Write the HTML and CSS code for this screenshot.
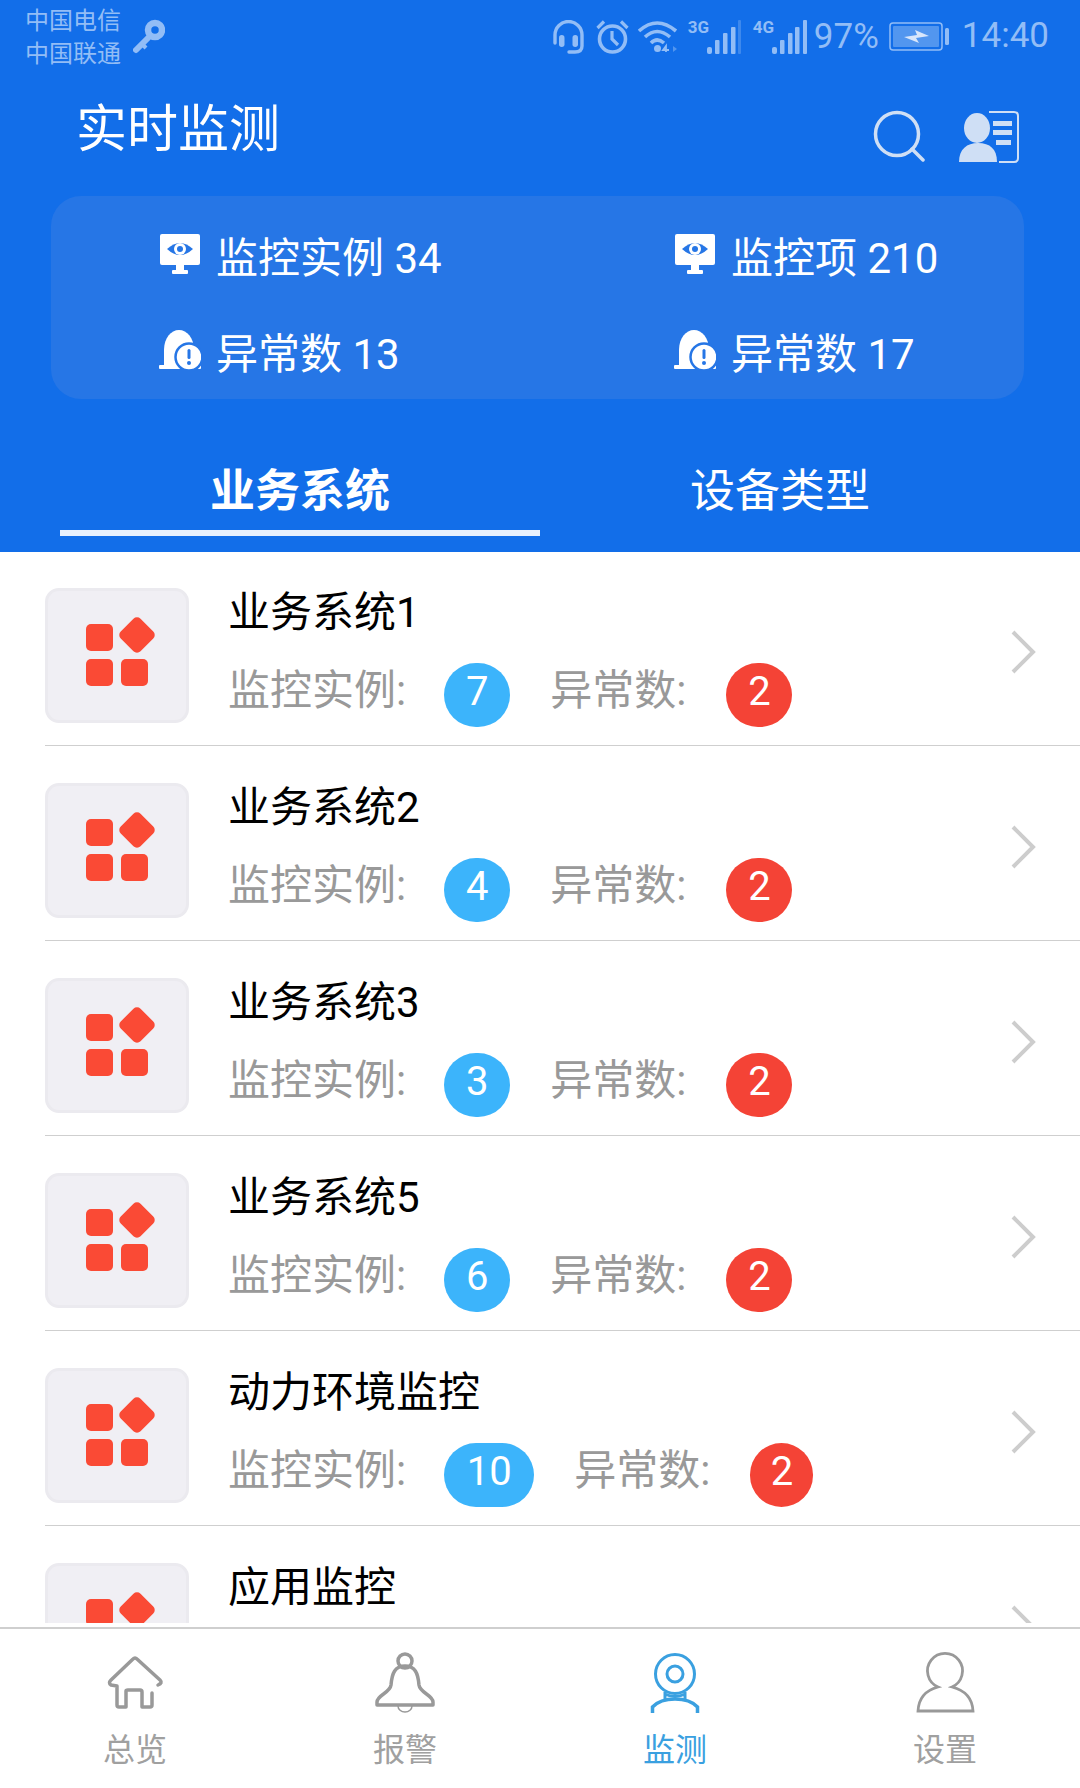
FILE: index.html
```html
<!DOCTYPE html>
<html lang="zh-CN">

<head>
    <meta charset="UTF-8">
    <meta name="viewport" content="width=device-width, initial-scale=1.0">
    <title>实时监测</title>
    <link rel="stylesheet" href="styles.css">
</head>

<body>
    <svg class="defs" width="0" height="0">
        <symbol id="apps" viewBox="0 -8 70 70">
            <rect x="0" y="0" width="27" height="27" rx="5" />
            <rect x="0" y="35" width="27" height="27" rx="5" />
            <rect x="35" y="35" width="27" height="27" rx="5" />
            <rect x="37" y="-3" width="28" height="28" rx="5" transform="rotate(45 51 11)" />
        </symbol>
        <symbol id="chevron" viewBox="0 0 26 44">
            <path d="M3 2 L23 22 L3 42" fill="none" stroke="#cdcdcd" stroke-width="4" />
        </symbol>
        <symbol id="monitor" viewBox="0 0 40 40">
            <rect x="0" y="0" width="40" height="31" rx="2" fill="#fff" />
            <rect x="16" y="30" width="8" height="6" fill="#fff" />
            <rect x="12" y="36" width="16" height="4" rx="1" fill="#fff" />
            <path d="M7 15 Q20 3 33 15 Q20 27 7 15 Z" fill="#2676e6" />
            <circle cx="20" cy="15" r="6" fill="#fff" />
            <circle cx="20" cy="15" r="3" fill="#2676e6" />
        </symbol>
        <symbol id="alert" viewBox="0 0 42 40">
            <path d="M5 35 V20 C5 8 12 0 20 0 C28 0 35 8 35 20 V35 Z" fill="#fff" />
            <rect x="0" y="35" width="42" height="4" rx="1" fill="#fff" />
            <circle cx="30" cy="27" r="13.5" fill="#fff" stroke="#2676e6" stroke-width="2.5" />
            <rect x="28.5" y="19" width="3" height="10" rx="1.5" fill="#2676e6" />
            <circle cx="30" cy="33" r="2" fill="#2676e6" />
        </symbol>
    </svg>

    <header class="app-header">
        <div class="status-bar">
            <div class="carriers">
                <span>中国电信</span>
                <span>中国联通</span>
            </div>
            <svg class="key" width="32" height="35" viewBox="0 0 32 35">
                <circle cx="22" cy="11" r="7" fill="none" stroke="currentColor" stroke-width="6.5" />
                <path d="M16 18 L3 31" stroke="currentColor" stroke-width="6" stroke-linecap="round" />
                <path d="M9 25 L13 29" stroke="currentColor" stroke-width="4" />
            </svg>
            <div class="status-right">
                <svg class="st-headset" width="31" height="34" viewBox="0 0 31 34" fill="none" stroke="currentColor">
                    <path d="M2 23 V15 A13.5 13.5 0 0 1 29 15 V26 Q29 32 22 32 H16" stroke-width="3.400" stroke-linecap="round" />
                    <rect x="6" y="15" width="5.500" height="12" rx="2.700" fill="currentColor" stroke="none" />
                    <rect x="19.500" y="15" width="5.500" height="12" rx="2.700" fill="currentColor" stroke="none" />
                </svg>
                <svg class="st-alarm" width="33" height="34" viewBox="0 0 33 34" fill="none" stroke="currentColor">
                    <circle cx="16.500" cy="19" r="13" stroke-width="3.600" />
                    <path d="M16 11 V19 L22 25" stroke-width="3.200" />
                    <path d="M1.500 8 L8 1.500 M31.500 8 L25 1.500" stroke-width="3.200" />
                </svg>
                <svg class="st-wifi" width="40" height="33" viewBox="0 0 40 33" fill="none" stroke="currentColor">
                    <path d="M1 11 Q19 -5 38 11" stroke-width="3.600" />
                    <path d="M7 17 Q19 6 32 17" stroke-width="3.600" />
                    <path d="M13 23 Q19 17 26 23" stroke-width="3.600" />
                    <circle cx="19.500" cy="28.500" r="3.500" fill="currentColor" stroke="none" />
                    <path d="M28 32 V26 L25 30 H31" stroke-width="1.800" />
                    <path d="M35 26 L39 29 L35 32 Z" fill="currentColor" stroke="none" opacity=".5" />
                </svg>
                <span class="net-label">3G</span>
                <svg class="st-signal" width="34" height="34" viewBox="0 0 34 34" fill="currentColor">
                    <rect x="0" y="27" width="5" height="7" rx="2" />
                    <rect x="8" y="20" width="4.500" height="14" rx="1" />
                    <rect x="16" y="13" width="4.500" height="21" rx="1" />
                    <rect x="24" y="7" width="4.500" height="27" rx="1" />
                    <rect x="31" y="0" width="3" height="34" rx="1" opacity=".35" />
                </svg>
                <span class="net-label second">4G</span>
                <svg class="st-signal" width="35" height="34" viewBox="0 0 35 34" fill="currentColor">
                    <rect x="0" y="27" width="5" height="7" rx="2" />
                    <rect x="8" y="20" width="4.500" height="14" rx="1" />
                    <rect x="16" y="13" width="4.500" height="21" rx="1" />
                    <rect x="23" y="7" width="4.500" height="27" rx="1" />
                    <rect x="31" y="0" width="4" height="34" rx="1" />
                </svg>
                <span class="battery-pct">97%</span>
                <svg class="st-battery" width="60" height="30" viewBox="0 0 60 30" fill="none">
                    <rect x="1" y="1" width="52" height="27" rx="3" stroke="currentColor" stroke-width="1.500" />
                    <rect x="4" y="4" width="46" height="21" rx="1" fill="currentColor" opacity=".5" />
                    <rect x="56" y="6" width="4" height="17" rx="1.500" fill="currentColor" />
                    <path d="M15 15 L28 13 L26 8 L40 14 L27 16 L30 21 Z" fill="#d8e6fb" />
                </svg>
                <span class="clock">14:40</span>
            </div>
        </div>

        <div class="title-bar">
            <h1 class="page-title">实时监测</h1>
            <svg class="search-icon" width="52" height="52" viewBox="0 0 52 52" fill="none" stroke="#cfdff5">
                <circle cx="24" cy="24" r="21.500" stroke-width="3.500" />
                <path d="M39 39 L50 50" stroke-width="3.500" stroke-linecap="round" />
            </svg>
            <svg class="contact-icon" width="60" height="52" viewBox="0 0 60 52" fill="none">
                <path d="M30 1 H55 Q59 1 59 5 V47 Q59 51 55 51 H40" stroke="#cfdff5" stroke-width="2" />
                <rect x="34" y="10" width="19" height="5" fill="#cfdff5" />
                <rect x="34" y="19" width="19" height="5" fill="#cfdff5" />
                <rect x="37" y="29" width="15" height="5" fill="#cfdff5" />
                <ellipse cx="18" cy="17" rx="13" ry="15" fill="#cfdff5" />
                <path d="M0 51 C0 38 8 32 19 32 C31 32 38 38 38 51 Z" fill="#cfdff5" />
            </svg>
        </div>

        <div class="summary-panel">
            <div class="summary-item">
                <svg class="summary-icon" width="42" height="40"><use href="#monitor" /></svg>
                <span>监控实例 34</span>
            </div>
            <div class="summary-item">
                <svg class="summary-icon" width="42" height="40"><use href="#monitor" /></svg>
                <span>监控项 210</span>
            </div>
            <div class="summary-item">
                <svg class="summary-icon" width="42" height="40"><use href="#alert" /></svg>
                <span>异常数 13</span>
            </div>
            <div class="summary-item">
                <svg class="summary-icon" width="42" height="40"><use href="#alert" /></svg>
                <span>异常数 17</span>
            </div>
        </div>

        <div class="tabs">
            <div class="tab active">业务系统</div>
            <div class="tab">设备类型</div>
        </div>
    </header>

    <div class="system-list">
        <div class="system-row">
            <div class="system-icon"><svg width="70" height="70"><use href="#apps" /></svg></div>
            <div class="system-info">
                <div class="system-name">业务系统1</div>
                <div class="system-meta">
                    <span class="meta-label">监控实例:</span><span class="badge blue">7</span>
                    <span class="meta-label">异常数:</span><span class="badge red">2</span>
                </div>
            </div>
            <svg class="chevron" width="26" height="44"><use href="#chevron" /></svg>
        </div>
        <div class="system-row">
            <div class="system-icon"><svg width="70" height="70"><use href="#apps" /></svg></div>
            <div class="system-info">
                <div class="system-name">业务系统2</div>
                <div class="system-meta">
                    <span class="meta-label">监控实例:</span><span class="badge blue">4</span>
                    <span class="meta-label">异常数:</span><span class="badge red">2</span>
                </div>
            </div>
            <svg class="chevron" width="26" height="44"><use href="#chevron" /></svg>
        </div>
        <div class="system-row">
            <div class="system-icon"><svg width="70" height="70"><use href="#apps" /></svg></div>
            <div class="system-info">
                <div class="system-name">业务系统3</div>
                <div class="system-meta">
                    <span class="meta-label">监控实例:</span><span class="badge blue">3</span>
                    <span class="meta-label">异常数:</span><span class="badge red">2</span>
                </div>
            </div>
            <svg class="chevron" width="26" height="44"><use href="#chevron" /></svg>
        </div>
        <div class="system-row">
            <div class="system-icon"><svg width="70" height="70"><use href="#apps" /></svg></div>
            <div class="system-info">
                <div class="system-name">业务系统5</div>
                <div class="system-meta">
                    <span class="meta-label">监控实例:</span><span class="badge blue">6</span>
                    <span class="meta-label">异常数:</span><span class="badge red">2</span>
                </div>
            </div>
            <svg class="chevron" width="26" height="44"><use href="#chevron" /></svg>
        </div>
        <div class="system-row">
            <div class="system-icon"><svg width="70" height="70"><use href="#apps" /></svg></div>
            <div class="system-info">
                <div class="system-name">动力环境监控</div>
                <div class="system-meta">
                    <span class="meta-label">监控实例:</span><span class="badge blue wide">10</span>
                    <span class="meta-label">异常数:</span><span class="badge red narrow">2</span>
                </div>
            </div>
            <svg class="chevron" width="26" height="44"><use href="#chevron" /></svg>
        </div>
        <div class="system-row">
            <div class="system-icon"><svg width="70" height="70"><use href="#apps" /></svg></div>
            <div class="system-info">
                <div class="system-name">应用监控</div>
            </div>
            <svg class="chevron" width="26" height="44"><use href="#chevron" /></svg>
        </div>
    </div>

    <nav class="tab-bar">
        <a class="tab-link">
            <svg width="60" height="60" viewBox="0 0 60 60" fill="none" stroke="#999" stroke-width="3.500" stroke-linejoin="round" stroke-linecap="round">
                <path d="M53 32 Q58 30 55 27 L32 6 Q30 4 28 6 L6 27 Q3 30 6 32 L12 33 V52 Q12 54 14 54 H21 V38 Q21 37 23 37 H35 Q37 37 37 39 V54 H45 Q47 54 47 52 V40" />
            </svg>
            <span>总览</span>
        </a>
        <a class="tab-link">
            <svg width="60" height="60" viewBox="0 0 60 60" fill="none" stroke="#999" stroke-width="3.500" stroke-linejoin="round">
                <circle cx="30" cy="8" r="7" />
                <path d="M30 13 C20 13 17 20 16 32 C15 40 2 42 2 49 V52 H58 V49 C58 42 45 40 44 32 C43 20 40 13 30 13 Z" />
                <path d="M23 53 A7 6 0 0 0 37 53" stroke-width="1.500" />
            </svg>
            <span>报警</span>
        </a>
        <a class="tab-link current">
            <svg width="60" height="60" viewBox="0 0 60 60" fill="none" stroke="#3aa0e0" stroke-width="3">
                <circle cx="30" cy="21" r="19.500" />
                <circle cx="30" cy="21" r="8" />
                <path d="M20 39 V48 M40 39 V48 M20 41 Q30 46 40 41" />
                <path d="M7.500 60 V54 Q15 46 30 46 Q45 46 52.500 54 V60" stroke-width="3.500" />
            </svg>
            <span>监测</span>
        </a>
        <a class="tab-link">
            <svg width="60" height="60" viewBox="0 2 60 60" fill="none" stroke="#999" stroke-width="2.800">
                <path d="M23 36 A17.500 17.500 0 1 1 37 36 Q57 41 58 60 H3 Q4 41 23 36 Z" />
            </svg>
            <span>设置</span>
        </a>
    </nav>
</body>

</html>
```

FILE: styles.css
```css
html, body {
    margin: 0;
    padding: 0;
    height: 100%;
}

body {
    display: flex;
    flex-direction: column;
    overflow: hidden;
    background-color: #fff;
    font-family: Roboto, 'Noto Sans CJK SC', sans-serif;
}

.defs {
    position: absolute;
}

/* Blue header */
.app-header {
    flex-shrink: 0;
    height: 552px;
    background-color: #126ee9;
    color: #fff;
}

/* Status bar */
.status-bar {
    display: flex;
    height: 70px;
    padding: 0 31px 0 25px;
    color: #92bdf6;
}

.carriers {
    display: flex;
    flex-direction: column;
    padding-top: 5px;
    font-size: 24px;
    line-height: 33px;
}

.key {
    margin: 19px 0 0 12px;
}

.status-right {
    display: flex;
    align-items: flex-start;
    margin-left: auto;
    padding-top: 20px;
}

.st-alarm {
    margin-left: 12px;
}

.st-wifi {
    margin-left: 9px;
}

.net-label {
    width: 19px;
    margin-left: 10px;
    font-family: 'Liberation Sans Narrow', Roboto, sans-serif;
    font-size: 17px;
    font-weight: 700;
    line-height: 14px;
}

.net-label.second {
    margin-left: 12px;
}

.battery-pct {
    margin-left: 7px;
    font-size: 35px;
    line-height: 36px;
    margin-top: -1px;
}

.st-battery {
    margin: 2px 0 0 10px;
}

.clock {
    margin: -2px 0 0 13px;
    font-size: 35px;
    line-height: 36px;
}

/* Page title row */
.title-bar {
    display: flex;
    align-items: flex-start;
    height: 126px;
    padding-left: 76px;
}

.page-title {
    margin: 31px 0 0;
    font-size: 51px;
    font-weight: 400;
    line-height: 58px;
}

.search-icon {
    margin: 40px 0 0 auto;
}

.contact-icon {
    margin: 41px 61px 0 34px;
}

/* Summary panel */
.summary-panel {
    display: grid;
    grid-template-columns: 515px 1fr;
    grid-auto-rows: 96px;
    height: 203px;
    box-sizing: border-box;
    margin: 0 56px 0 51px;
    padding: 10px 0 0 108px;
    background-color: #2676e6;
    border-radius: 30px;
}

.summary-item {
    display: flex;
    align-items: center;
    font-size: 42px;
}

.summary-icon {
    margin-right: 15px;
}

/* Tabs */
.tabs {
    display: flex;
    padding: 62px 60px 0;
}

.tab {
    flex: 1;
    height: 75px;
    box-sizing: border-box;
    font-size: 45px;
    line-height: 62px;
    text-align: center;
}

.tab.active {
    border-bottom: 6px solid #e8f1fd;
    font-weight: 700;
}

/* System list */
.system-list {
    flex: 1;
    min-height: 0;
    margin: -1px 0 4px;
    overflow: hidden;
}

.system-row {
    display: flex;
    align-items: flex-start;
    box-sizing: border-box;
    height: 195px;
    margin-left: 45px;
    padding-top: 37px;
    border-bottom: 1px solid #cfcfcf;
}

.system-icon {
    display: flex;
    justify-content: center;
    align-items: center;
    flex-shrink: 0;
    box-sizing: border-box;
    width: 144px;
    height: 135px;
    background-color: #f0eff4;
    border: 3px solid #ebeaef;
    border-radius: 14px;
    fill: #fa4a35;
}

.system-icon svg {
    margin: 0 0 9px 8px;
}

.system-info {
    flex: 1;
    margin-left: 39px;
}

.system-name {
    height: 77px;
    margin-top: -2px;
    color: #000;
    font-size: 42px;
    line-height: 54px;
}

.system-meta {
    display: flex;
    align-items: flex-start;
}

.meta-label {
    color: #999;
    font-size: 42px;
    line-height: 56px;
}

.badge {
    min-width: 66px;
    height: 64px;
    box-sizing: border-box;
    margin: 0 40px 0 38px;
    border-radius: 32px;
    color: #fff;
    font-size: 40px;
    line-height: 58px;
    text-align: center;
}

.badge.wide {
    width: 90px;
}

.blue {
    background-color: #3cb4fb;
}

.red {
    margin-left: 40px;
    background-color: #f44336;
}

.red.narrow {
    min-width: 63px;
}

.chevron {
    flex-shrink: 0;
    margin: 42px 44px 0 0;
}

/* Bottom navigation */
.tab-bar {
    display: flex;
    flex-shrink: 0;
    height: 161px;
    box-sizing: border-box;
    padding-top: 24px;
    border-top: 2px solid #cfcfcf;
}

.tab-link {
    display: flex;
    flex: 1;
    flex-direction: column;
    align-items: center;
    color: #a0a0a0;
    font-size: 32px;
}

.tab-link svg {
    overflow: visible;
}

.tab-link span {
    margin-top: 15px;
    line-height: 44px;
}

.tab-link.current {
    color: #3aa0e0;
}
```
